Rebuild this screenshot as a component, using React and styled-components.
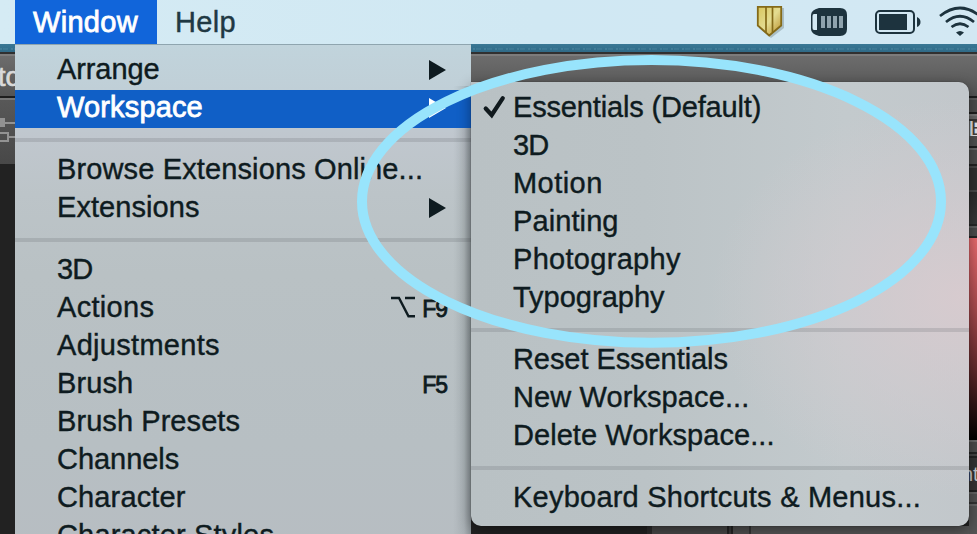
import React from "react";
import styled, { createGlobalStyle, css } from "styled-components";

const GlobalStyle = createGlobalStyle`
  body {
    margin: 0;
    overflow: hidden;
    font-family: "Liberation Sans", Arial, sans-serif;
  }
`;

const Screen = styled.div`
  position: relative;
  display: flex;
  flex-direction: column;
  width: 977px;
  height: 534px;
  overflow: hidden;
  background: #222;
`;

const MenuBar = styled.header`
  display: flex;
  flex: 0 0 44px;
  justify-content: space-between;
  padding-left: 15px;
  background: linear-gradient(90deg, #d5ebf4, #d0e8f3 55%, #d3e8f3);
`;

const MenuTitles = styled.nav`
  display: flex;
`;

const MenuTitle = styled.div`
  box-sizing: border-box;
  height: 44px;
  padding: 6px 18px 0;
  font-size: 29px;
  line-height: 32px;
  letter-spacing: ${(p) => p.$track}px;
  color: #203843;
  -webkit-text-stroke: 0.4px currentColor;
  ${(p) =>
    p.$active &&
    css`
      width: 142px;
      color: #fff;
      background: #1165da;
      -webkit-text-stroke-width: 0.8px;
    `}
`;

const StatusIcons = styled.div`
  display: flex;
  flex: 0 0 277px;
  height: 44px;
`;

const StatusSvg = styled.svg`
  display: block;
`;

const Wallpaper = styled.div`
  flex: 0 0 8px;
  background:
    repeating-linear-gradient(90deg, rgba(150, 200, 215, 0.16) 0 2px, transparent 2px 3px, rgba(150, 200, 215, 0.1) 3px 8px, transparent 8px 11px) 0 4px / 100% 2px no-repeat,
    linear-gradient(#3a7895, #2f6a87);
`;

const AppWindow = styled.main`
  display: flex;
  flex: 1;
  flex-direction: column;
  min-height: 0;
`;

const TitleStrip = styled.div`
  box-sizing: border-box;
  flex: 0 0 46px;
  padding-top: 10px;
  overflow: hidden;
  font-size: 27px;
  line-height: 26px;
  white-space: nowrap;
  color: #dadada;
  border-top: 2px solid #303030;
  border-bottom: 2px solid #1e1e1e;
  background: linear-gradient(#7c7c7c 0 2px, #6c6c6c 2px, #555);
`;

const TitleText = styled.span`
  margin-left: -2px;
  -webkit-text-stroke: 0.7px currentColor;
`;

const Workarea = styled.div`
  display: flex;
  flex: 1;
  min-height: 0;
`;

const ToolEdge = styled.div`
  display: flex;
  flex: 0 0 15px;
  flex-direction: column;
`;

const ToolGlyphs = styled.div`
  display: flex;
  flex: 0 0 66px;
  background: linear-gradient(#777 0 2px, #585858 2px, #484848);
`;

const Center = styled.div`
  display: flex;
  flex: 1;
  align-items: flex-end;
  background: #222;
`;

const PanelFooter = styled.div`
  display: flex;
  width: 100%;
  height: 8px;
  padding-left: 632px;
`;

const FooterCell = styled.div`
  flex: ${(p) => p.$flex};
  background: ${(p) => p.$tone};
`;

const PanelEdge = styled.div`
  display: flex;
  flex: 0 0 8px;
  flex-direction: column;
  overflow: hidden;
`;

const EdgeBand = styled.div`
  flex: 0 0 ${(p) => p.$h}px;
  overflow: hidden;
  font-size: 20px;
  line-height: ${(p) => p.$h}px;
  text-indent: ${(p) => p.$indent || 0}px;
  white-space: nowrap;
  color: ${(p) => p.$ink || "#c8c8c8"};
  background: ${(p) => p.$tone};
`;

const menuSurface = css`
  position: absolute;
  box-sizing: border-box;
  padding: 8px 0;
`;

const DropMenu = styled.div`
  ${menuSurface}
  top: 44px;
  left: 15px;
  width: 456px;
  height: 520px;
  box-shadow: inset 0 1px #8fa5af;
  background:
    linear-gradient(90deg, transparent 438px, rgba(60, 70, 75, 0.1) 449px, rgba(50, 60, 65, 0.32)) 0 42px / 100% 100% no-repeat,
    linear-gradient(#c1d4dc, #c0cfd7 46px, #c0c7ce 92px, #bcc4c8 150px, #b9c1c4 230px, #b7bfc3 400px, #b7bdc2);
`;

const SubMenu = styled.div`
  ${menuSurface}
  top: 82px;
  left: 471px;
  width: 498px;
  height: 444px;
  border-radius: 0 10px 10px 10px;
  box-shadow: 0 4px 14px rgba(0, 0, 0, 0.42), 0 0 1px rgba(0, 0, 0, 0.6);
  background:
    radial-gradient(ellipse 250px 200px at 490px 215px, rgba(217, 203, 207, 0.9), rgba(214, 204, 208, 0.5) 50%, transparent),
    linear-gradient(90deg, #b9c1c4, #bbc3c6 35%, #c3cacd 75%, #c2c7cb);
`;

const Row = styled.div`
  display: flex;
  box-sizing: border-box;
  height: 38px;
  padding: 1px 24px 0 42px;
  font-size: 29px;
  line-height: 32px;
  letter-spacing: ${(p) => p.$track}px;
  white-space: nowrap;
  color: ${(p) => (p.$active ? "#fff" : "#0e1b20")};
  background: ${(p) => (p.$active ? "#105fc6" : "transparent")};
  -webkit-text-stroke: ${(p) => (p.$active ? 0.8 : 0.4)}px currentColor;
`;

const Label = styled.span`
  flex: 1;
`;

const Check = styled.svg`
  flex: none;
  width: 26px;
  height: 28px;
  margin: 2px 5px 0 -31px;
`;

const Arrow = styled.svg`
  flex: none;
  width: 18px;
  height: 20px;
  margin: 7px 0 0;
`;

const Shortcut = styled.span`
  display: flex;
  gap: 7px;
  padding-top: 2px;
  font-size: 23px;
  letter-spacing: -1px;
  -webkit-text-stroke-width: 0.8px;
`;

const OptionKey = styled.svg`
  width: 25px;
  height: 22px;
  margin-top: 3px;
`;

const Separator = styled.div`
  height: 4px;
  margin: 10px 0;
  background: rgba(85, 90, 98, 0.19);
`;

const Highlight = styled.svg`
  position: absolute;
  inset: 0;
`;

const windowItems = [
  { label: "Arrange", arrow: true, track: -0.1 },
  { label: "Workspace", arrow: true, active: true, track: 0.15 },
  null,
  { label: "Browse Extensions Online...", track: 0.13 },
  { label: "Extensions", arrow: true, track: 0.07 },
  null,
  { label: "3D", track: -0.8 },
  { label: "Actions", track: 0.3, option: true, keys: "F9" },
  { label: "Adjustments", track: 0.3 },
  { label: "Brush", keys: "F5", track: 0.1 },
  { label: "Brush Presets", track: 0.07 },
  { label: "Channels", track: -0.05 },
  { label: "Character", track: 0.13 },
  { label: "Character Styles", track: 0.17 },
];

const workspaceItems = [
  { label: "Essentials (Default)", checked: true, track: -0.16 },
  { label: "3D", track: -0.8 },
  { label: "Motion", track: 0.45 },
  { label: "Painting", track: 0.1 },
  { label: "Photography", track: 0.3 },
  { label: "Typography", track: 0 },
  null,
  { label: "Reset Essentials", track: -0.07 },
  { label: "New Workspace...", track: 0.1 },
  { label: "Delete Workspace...", track: 0.05 },
  null,
  { label: "Keyboard Shortcuts & Menus...", track: 0.23 },
];

const panelBands = [
  { h: 14, tone: "linear-gradient(#5c5c5c 0 2px, #4b4b4b 2px)" },
  { h: 2, tone: "#1f1f1f" },
  { h: 5, tone: "linear-gradient(#777 0 2px, #666 2px)" },
  { h: 2, tone: "#353535" },
  { h: 15, tone: "linear-gradient(90deg, #606060 0 1px, #8fc4e4 1px 2px, #e4e6e8 2px)", text: "E", ink: "#44403c", indent: 2 },
  { h: 10, tone: "#505050" },
  { h: 2, tone: "#1f1f1f" },
  { h: 16, tone: "linear-gradient(#666 0 2px, #4c4c4c 2px)" },
  { h: 2, tone: "#222" },
  { h: 24, tone: "linear-gradient(#454545 0 2px, #303030 2px)" },
  { h: 34, tone: "linear-gradient(#484848 0 2px, #2c2c2c 2px, #383838)" },
  { h: 12, tone: "linear-gradient(#282828 0 2px, #606060 2px 4px, #4b4b4b 4px)" },
  { h: 2, tone: "#262626" },
  { h: 202, tone: "linear-gradient(#e8696d, #a64a4d 35%, #61292b 65%, #000)" },
  { h: 12, tone: "linear-gradient(#696969 0 2px, #4b4b4b 2px)" },
  { h: 6, tone: "linear-gradient(#242424 0 2px, #444 2px 4px, #222 4px)" },
  { h: 32, tone: "#343434", text: "nt", indent: -7 },
  { h: 12, tone: "linear-gradient(#202020 0 2px, #626262 2px 4px, #505050 4px)" },
  { h: 4, tone: "linear-gradient(#333 0 2px, #666 2px)" },
  { h: 30, tone: "#545454" },
];

const footerCells = [
  ["0 0 5px", "#2c2c2c"],
  ["0 0 75px", "#484848"],
  ["0 0 6px", "linear-gradient(90deg, #242424 0 2px, #3a3a3a 2px 4px, #242424 4px)"],
  ["0 0 16px", "#505050"],
  ["0 0 2px", "#363636"],
  ["1", "#565656"],
];

function MenuRows({ items }) {
  return items.map((item, i) =>
    item ? (
      <Row key={item.label} $active={item.active} $track={item.track}>
        {item.checked && (
          <Check viewBox="0 0 26 28">
            <path d="M3.7 15.5 L9.7 22 L20.8 5.2" fill="none" stroke="#10191d" strokeWidth="4.2" strokeLinecap="round" strokeLinejoin="miter" />
          </Check>
        )}
        <Label>{item.label}</Label>
        {item.arrow && (
          <Arrow viewBox="0 0 18 20">
            <path d="M0 0 L17 10 L0 20 Z" fill="currentColor" />
          </Arrow>
        )}
        {item.keys && (
          <Shortcut>
            {item.option && (
              <OptionKey viewBox="0 0 25 22">
                <path d="M1 2 H9 L18.5 20.2 H25 M15 2 H25" fill="none" stroke="currentColor" strokeWidth="2.4" />
              </OptionKey>
            )}
            {item.keys}
          </Shortcut>
        )}
      </Row>
    ) : (
      <Separator key={`separator-${i}`} />
    )
  );
}

function StatusGlyphs() {
  return (
    <StatusSvg width="277" height="44" viewBox="0 0 277 44">
      <defs>
        <linearGradient id="gold" x1="0" y1="0" x2="1" y2="1">
          <stop offset="0" stopColor="#d8c65e" />
          <stop offset="0.5" stopColor="#e4dc91" />
          <stop offset="1" stopColor="#b78c27" />
        </linearGradient>
      </defs>
      <path d="M59 8 H84 V28 L71 38 L59 28 Z" fill="#6f7f80" opacity="0.4" />
      <path d="M57.8 6.8 H81.2 V25.5 L69.2 35.5 L57.8 25.5 Z" fill="url(#gold)" stroke="#846a18" strokeWidth="1.8" />
      <path d="M66 7 V32 M72.5 7 V32" stroke="#846a18" strokeWidth="1.7" />
      <path d="M119 8 H140 Q147 8 147 15 V29 Q147 36 140 36 H119 Q111 34 111 29 V15 Q111 10 119 8 Z" fill="#1d333e" />
      <path d="M114 14 H117 V30 H114 Q112.5 30 112.5 28 V16 Q112.5 14 114 14 Z" fill="#d3e9f3" />
      <path d="M121 16 H125 V28 H121 Z M127 16 H131 V28 H127 Z M133 16 H137 V28 H133 Z M139 16 H143 V28 H139 Z" fill="#8fa3ad" />
      <rect x="176" y="11" width="38" height="22" rx="4" fill="none" stroke="#1d333e" strokeWidth="2" />
      <rect x="179" y="14" width="28" height="16" fill="#1d333e" />
      <path d="M217 17 Q220.5 18.5 220.5 22 Q220.5 25.5 217 27 Z" fill="#1d333e" />
      <path d="M240 16 Q260 0 280 16 M246 22 Q260 10.5 274 22 M251.5 27 Q260 20.5 268.5 27" fill="none" stroke="#1d333e" strokeWidth="2.7" />
      <path d="M256 32.5 Q260 29.5 264 32.5 L260 36 Z" fill="#1d333e" />
    </StatusSvg>
  );
}

export default function App() {
  return (
    <Screen>
      <GlobalStyle />
      <MenuBar>
        <MenuTitles>
          <MenuTitle $active $track={0.3}>Window</MenuTitle>
          <MenuTitle $track={0.3}>Help</MenuTitle>
        </MenuTitles>
        <StatusIcons>
          <StatusGlyphs />
        </StatusIcons>
      </MenuBar>
      <Wallpaper />
      <AppWindow>
        <TitleStrip>
          <TitleText>to</TitleText>
        </TitleStrip>
        <Workarea>
          <ToolEdge>
            <ToolGlyphs>
              <svg width="15" height="66" viewBox="0 0 15 66">
                <path d="M0 20 H5 V29 H0 Z" fill="#929292" />
                <path d="M5 25 H15 M9 39 H15 M0 35 H8 V43 H0" fill="none" stroke="#939393" strokeWidth="2" />
              </svg>
            </ToolGlyphs>
          </ToolEdge>
          <Center>
            <PanelFooter>
              {footerCells.map(([flex, tone], i) => (
                <FooterCell key={i} $flex={flex} $tone={tone} />
              ))}
            </PanelFooter>
          </Center>
          <PanelEdge>
            {panelBands.map((band, i) => (
              <EdgeBand key={i} $h={band.h} $tone={band.tone} $ink={band.ink} $indent={band.indent}>
                {band.text}
              </EdgeBand>
            ))}
          </PanelEdge>
        </Workarea>
      </AppWindow>
      <DropMenu>
        <MenuRows items={windowItems} />
      </DropMenu>
      <SubMenu>
        <MenuRows items={workspaceItems} />
      </SubMenu>
      <Highlight width="977" height="534" viewBox="0 0 977 534">
        <ellipse cx="651.5" cy="201.4" rx="289.5" ry="141.4" fill="none" stroke="#98e4fc" strokeWidth="10" />
      </Highlight>
    </Screen>
  );
}
